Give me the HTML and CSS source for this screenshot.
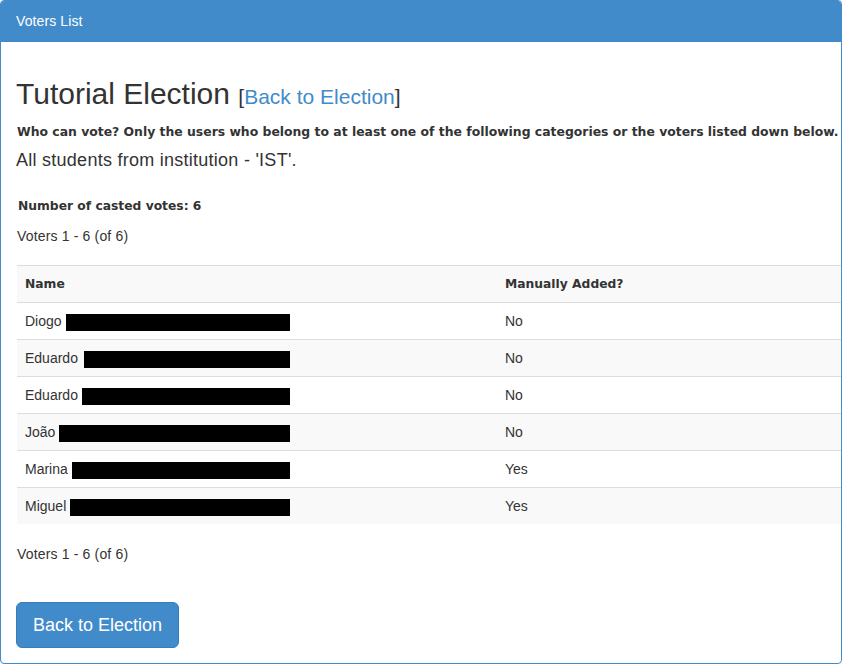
FILE: index.html
```html
<!DOCTYPE html>
<html>
<head>
<meta charset="utf-8">
<link rel="stylesheet" href="styles.css">
</head>
<body>
<div class="panel">
  <div class="panel-heading">Voters List</div>
  <div class="panel-body">
    <h2 class="title">Tutorial Election <small class="title-link">[<a href="#">Back to Election</a>]</small></h2>
    <p class="who">Who can vote? Only the users who belong to at least one of the following categories or the voters listed down below.</p>
    <h4 class="category">All students from institution - 'IST'.</h4>
    <div class="voters">
      <p class="count">Number of casted votes: 6</p>
      <p class="range">Voters 1 - 6 (of 6)</p>
      <table class="table">
        <tbody>
          <tr class="head"><th class="col-name">Name</th><th>Manually Added?</th></tr>
          <tr><td><div class="name">Diogo<span class="redact"></span></div></td><td>No</td></tr>
          <tr class="striped"><td><div class="name">Eduardo<span class="redact wide"></span></div></td><td>No</td></tr>
          <tr><td><div class="name">Eduardo<span class="redact"></span></div></td><td>No</td></tr>
          <tr class="striped"><td><div class="name">João<span class="redact"></span></div></td><td>No</td></tr>
          <tr><td><div class="name">Marina<span class="redact"></span></div></td><td>Yes</td></tr>
          <tr class="striped"><td><div class="name">Miguel<span class="redact"></span></div></td><td>Yes</td></tr>
        </tbody>
      </table>
      <p class="range bottom">Voters 1 - 6 (of 6)</p>
    </div>
    <a class="btn" href="#">Back to Election</a>
  </div>
</div>
</body>
</html>
```

FILE: styles.css
```css
* { box-sizing: border-box; }
html, body { margin: 0; padding: 0; }
body {
  font-family: "Liberation Sans", Arial, sans-serif;
  font-size: 14px;
  line-height: 20px;
  color: #333;
  background: #fff;
}
.panel {
  width: 842px;
  height: 664px;
  border: 1px solid #428bca;
  border-radius: 4px;
  overflow: hidden;
}
.panel-heading {
  background: #428bca;
  color: #fff;
  height: 41px;
  padding: 10px 15px;
  letter-spacing: 0.1px;
}
.panel-body {
  padding: 15px 0 15px 15px;
}
.title {
  font-size: 30px;
  font-weight: normal;
  line-height: 33px;
  margin: 20px 0 9px;
}
.title-link {
  font-size: 21px;
  color: #333;
}
.title-link a { color: #428bca; text-decoration: none; }
.who {
  font-family: "DejaVu Sans", Verdana, sans-serif;
  font-weight: bold;
  font-size: 12.4px;
  margin: 0;
  white-space: nowrap;
  padding-left: 1px;
}
.category {
  font-size: 18px;
  font-weight: normal;
  line-height: 20px;
  margin: 8px 0 0;
  letter-spacing: 0.26px;
}
.voters { margin-left: 1px; }
.count {
  font-family: "DejaVu Sans", Verdana, sans-serif;
  font-weight: bold;
  font-size: 12.3px;
  margin: 26px 0 10px;
  padding-left: 1px;
}
.range { margin: 0 0 19px; letter-spacing: 0.16px; }
.range.bottom { margin: 20px 0 38px; }
.table {
  width: 824px;
  border-collapse: collapse;
  border-spacing: 0;
}
.table th, .table td {
  text-align: left;
  padding: 8px;
  border-top: 1px solid #ddd;
  line-height: 20px;
  vertical-align: top;
}
.table th {
  font-family: "DejaVu Sans", Verdana, sans-serif;
  font-weight: bold;
  font-size: 12.3px;
}
.col-name { width: 480px; }
.head, .striped { background: #f9f9f9; }
.name {
  display: flex;
  width: 265px;
  gap: 4px;
}
.redact {
  flex: 1;
  background: #000;
  height: 17px;
  margin-top: 3px;
}
.redact.wide { margin-left: 2px; }
.btn {
  display: inline-block;
  background: #428bca;
  border: 1px solid #357ebd;
  color: #fff;
  font-size: 18px;
  line-height: 24px;
  padding: 10px 16px;
  border-radius: 6px;
  text-decoration: none;
}
```
